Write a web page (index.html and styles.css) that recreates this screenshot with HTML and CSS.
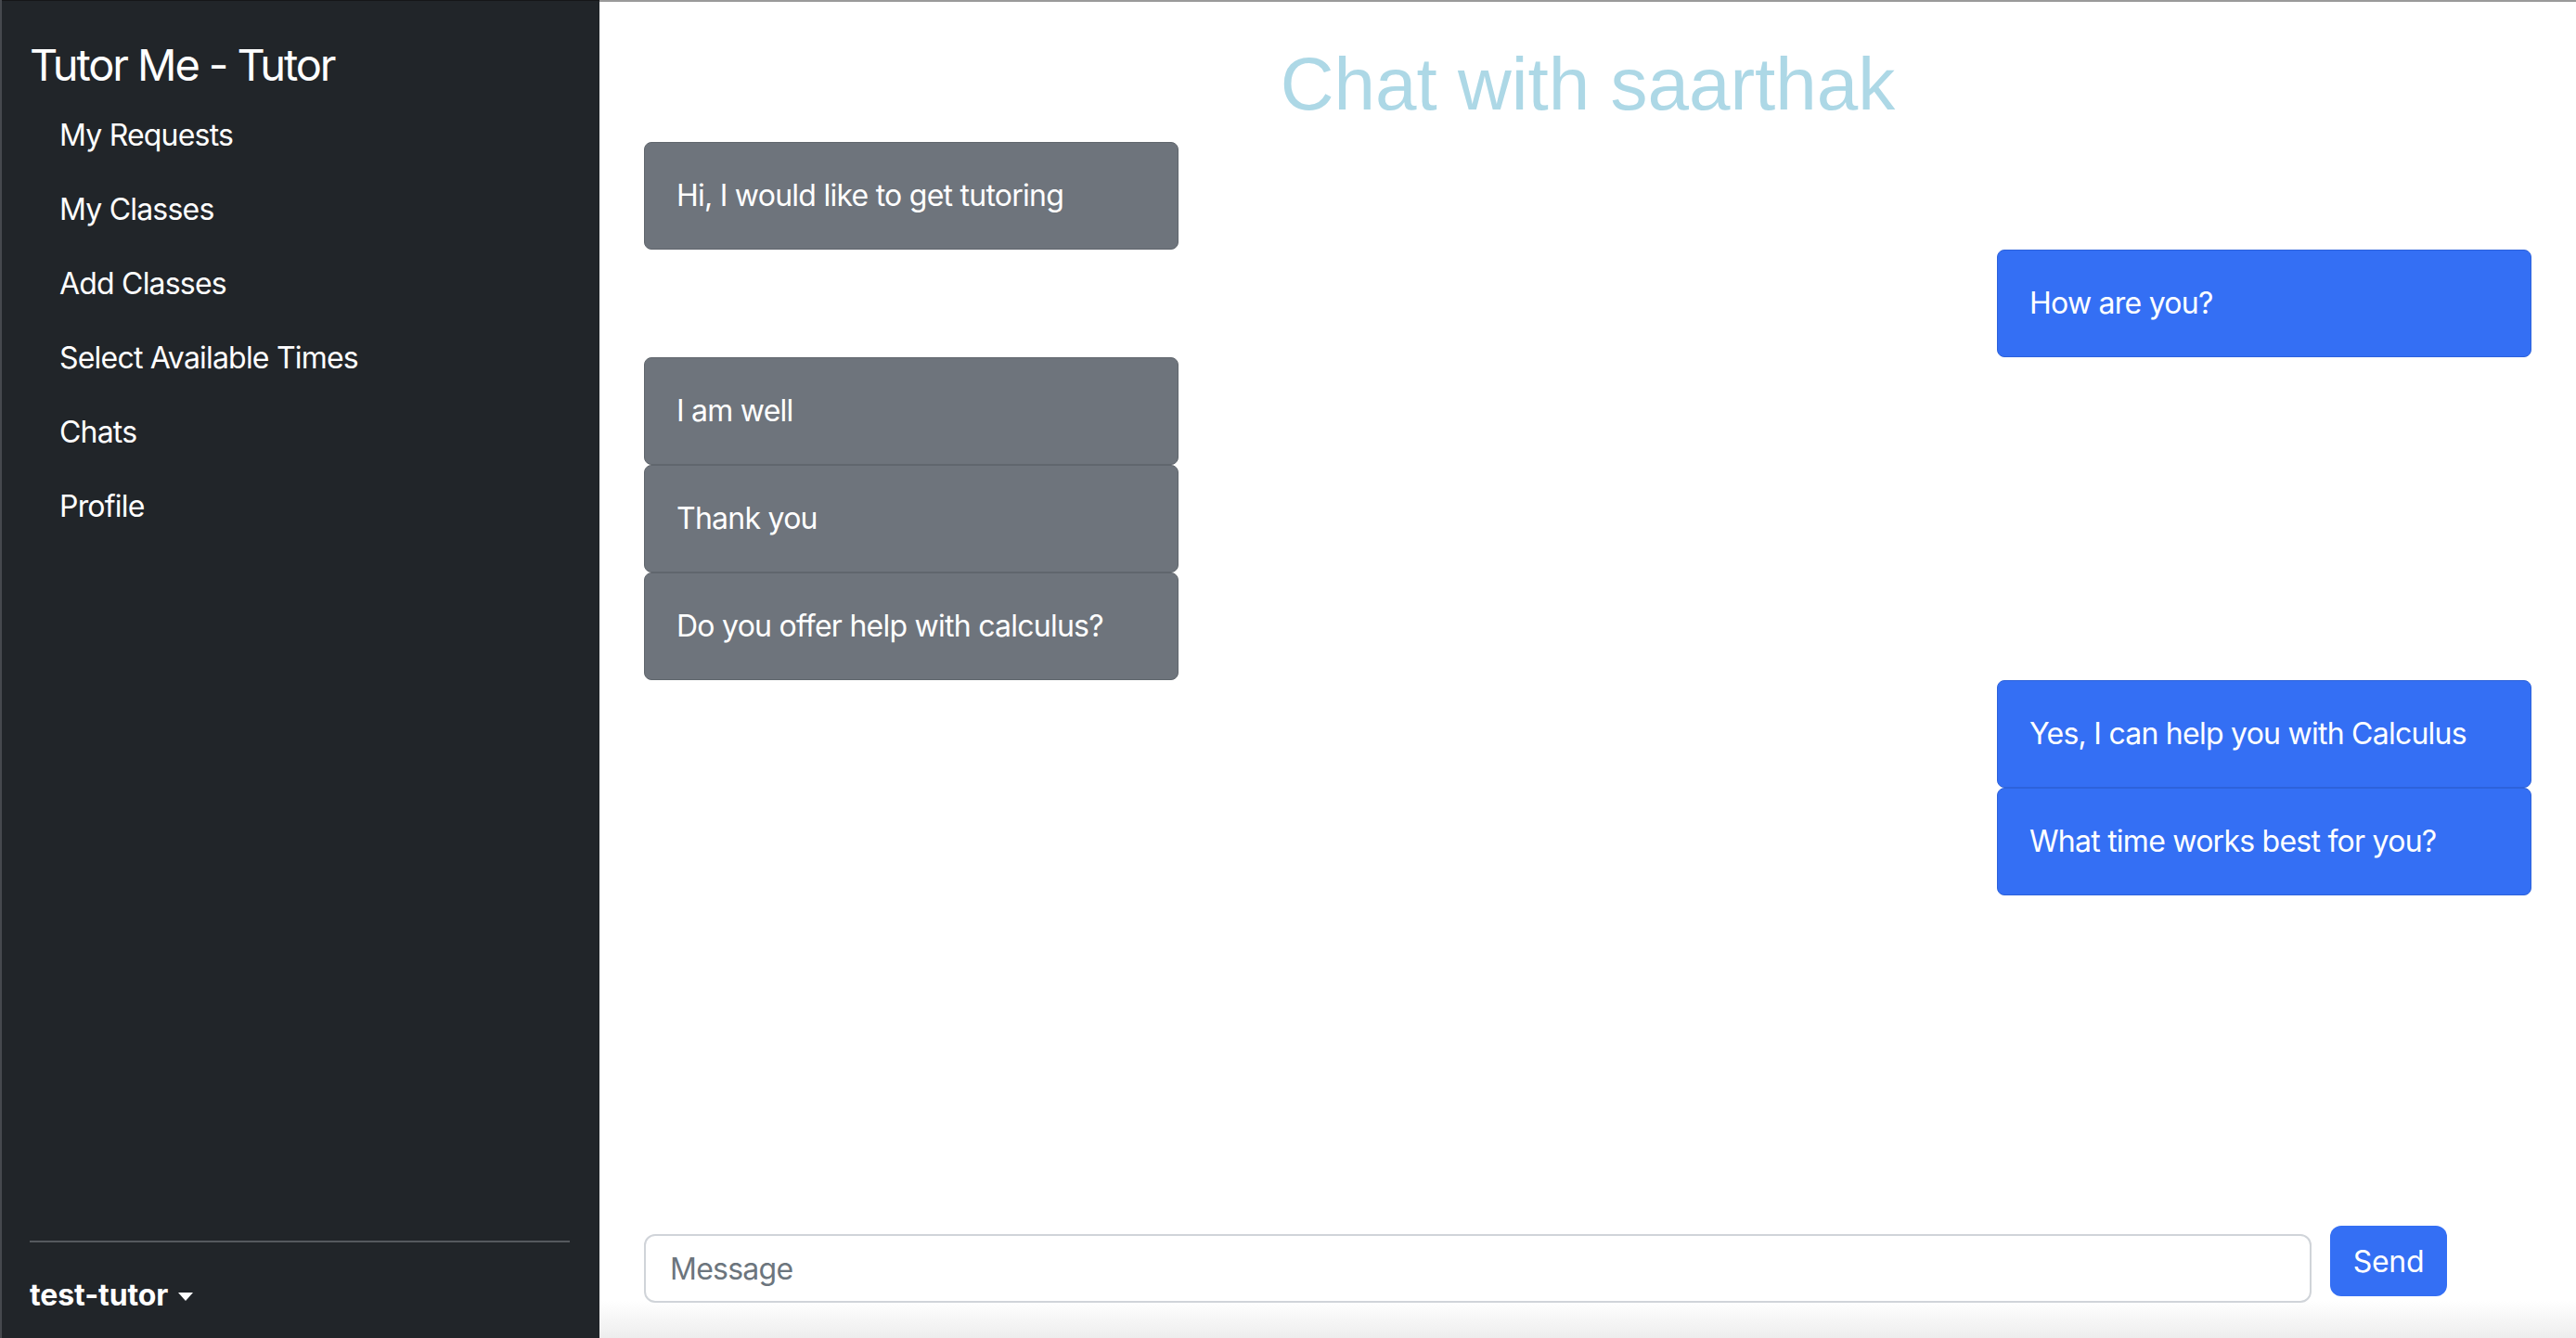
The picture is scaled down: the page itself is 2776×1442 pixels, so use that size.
FILE: index.html
```html
<!DOCTYPE html>
<html lang="en">
<head>
<meta charset="utf-8">
<title>Tutor Me - Tutor</title>
<link rel="stylesheet" href="styles.css">
</head>
<body>
  <aside class="sidebar">
    <a class="brand" href="#">Tutor Me - Tutor</a>
    <ul class="nav">
      <li><a href="#">My Requests</a></li>
      <li><a href="#">My Classes</a></li>
      <li><a href="#">Add Classes</a></li>
      <li><a href="#">Select Available Times</a></li>
      <li><a href="#">Chats</a></li>
      <li><a href="#">Profile</a></li>
    </ul>
    <hr class="divider">
    <div class="user">
      <span class="user-name">test-tutor</span><span class="caret"></span>
    </div>
  </aside>
  <main class="main">
    <h1 class="chat-title">Chat with saarthak</h1>
    <div class="messages">
      <div class="msg"><div class="bubble gray">Hi, I would like to get tutoring</div></div>
      <div class="msg right"><div class="bubble blue">How are you?</div></div>
      <div class="msg"><div class="bubble gray">I am well</div></div>
      <div class="msg"><div class="bubble gray">Thank you</div></div>
      <div class="msg"><div class="bubble gray">Do you offer help with calculus?</div></div>
      <div class="msg right"><div class="bubble blue">Yes, I can help you with Calculus</div></div>
      <div class="msg right"><div class="bubble blue">What time works best for you?</div></div>
    </div>
    <form class="composer">
      <input class="composer-input" type="text" placeholder="Message">
      <button class="send-btn" type="button">Send</button>
    </form>
  </main>
</body>
</html>
```
FILE: styles.css
```css
* { box-sizing: border-box; }

html, body {
  margin: 0;
  height: 100%;
}

body {
  display: flex;
  height: 1442px;
  overflow: hidden;
  font-family: Inter, "Liberation Sans", sans-serif;
  background: #ffffff;
}

.sidebar {
  width: 646px;
  flex-shrink: 0;
  display: flex;
  flex-direction: column;
  padding: 34px 32px 23px 32px;
  background: #212529;
  color: #ffffff;
  box-shadow: inset 2px 0 0 #46494e, inset 0 1px 0 #151618;
}

.brand {
  color: #ffffff;
  text-decoration: none;
  font-size: 47px;
  line-height: 72px;
  letter-spacing: -2.1px;
}

.nav {
  list-style: none;
  margin: 0;
  padding: 0;
  flex: 1;
}

.nav a {
  display: block;
  padding: 16px 32px;
  color: #ffffff;
  text-decoration: none;
  font-size: 32px;
  line-height: 48px;
  letter-spacing: -0.8px;
}

.divider {
  margin: 30px 0 32px 0;
  border: 0;
  border-top: 2px solid #55595e;
  height: 0;
}

.user {
  display: flex;
  align-items: center;
  height: 48px;
  font-size: 32px;
  font-weight: 700;
  letter-spacing: -0.1px;
}

.caret {
  display: inline-block;
  margin-left: 11px;
  margin-top: 4px;
  width: 0;
  height: 0;
  border-left: 8px solid transparent;
  border-right: 8px solid transparent;
  border-top: 9px solid #ffffff;
}

.main {
  flex: 1;
  display: flex;
  flex-direction: column;
  padding: 43px 48px 38px 48px;
  background: linear-gradient(to bottom, #ffffff 0, #ffffff 1402px, #ededed 1442px);
  box-shadow: inset 0 2px 0 #9a9a9a;
}

.chat-title {
  margin: 0 0 14px 0;
  text-align: center;
  font-family: "Liberation Sans", Arial, sans-serif;
  font-weight: 400;
  font-size: 80px;
  line-height: 96px;
  color: #add8e6;
}

.messages {
  flex: 1;
  display: flex;
  flex-direction: column;
}

.msg {
  display: flex;
}

.msg.right {
  justify-content: flex-end;
}

.bubble {
  width: 576px;
  padding: 33px 34px;
  border: 1px solid;
  border-radius: 8px;
  font-size: 32px;
  line-height: 48px;
  color: #ffffff;
  letter-spacing: -0.75px;
}

.bubble.gray {
  background: #6e747c;
  border-color: #60666d;
}

.bubble.blue {
  background: #346ff4;
  border-color: #2d62db;
}

.composer {
  display: flex;
  align-items: flex-start;
  margin: 0;
}

.composer-input {
  width: 1797px;
  height: 74px;
  margin-top: 9px;
  padding: 0 26px;
  border: 2px solid #d0d4d9;
  border-radius: 12px;
  font-family: Inter, "Liberation Sans", sans-serif;
  font-size: 32px;
  letter-spacing: -0.75px;
  color: #212529;
  background: #ffffff;
}

.composer-input::placeholder {
  color: #6c757d;
}

.send-btn {
  margin-left: 20px;
  width: 126px;
  height: 76px;
  border: 0;
  border-radius: 12px;
  background: #346ff4;
  color: #ffffff;
  font-family: Inter, "Liberation Sans", sans-serif;
  font-size: 32px;
  letter-spacing: -0.3px;
}
```
